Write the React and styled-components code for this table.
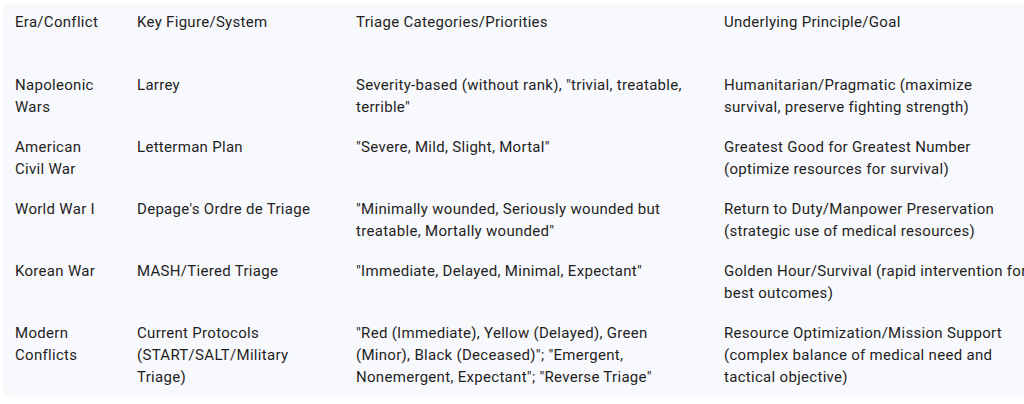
import React from "react";
import styled, { createGlobalStyle } from "styled-components";

// each cell keeps the line breaks of the source table
const rows = [
    {
        era: ["Napoleonic", "Wars"],
        figure: ["Larrey"],
        categories: ['Severity-based (without rank), "trivial, treatable,', 'terrible"'],
        goal: ["Humanitarian/Pragmatic (maximize", "survival, preserve fighting strength)"],
    },
    {
        era: ["American", "Civil War"],
        figure: ["Letterman Plan"],
        categories: ['"Severe, Mild, Slight, Mortal"'],
        goal: ["Greatest Good for Greatest Number", "(optimize resources for survival)"],
    },
    {
        era: ["World War I"],
        figure: ["Depage's Ordre de Triage"],
        categories: ['"Minimally wounded, Seriously wounded but', 'treatable, Mortally wounded"'],
        goal: ["Return to Duty/Manpower Preservation", "(strategic use of medical resources)"],
    },
    {
        era: ["Korean War"],
        figure: ["MASH/Tiered Triage"],
        categories: ['"Immediate, Delayed, Minimal, Expectant"'],
        goal: ["Golden Hour/Survival (rapid intervention for", "best outcomes)"],
    },
    {
        era: ["Modern", "Conflicts"],
        figure: ["Current Protocols", "(START/SALT/Military", "Triage)"],
        categories: [
            '"Red (Immediate), Yellow (Delayed), Green',
            '(Minor), Black (Deceased)"; "Emergent,',
            'Nonemergent, Expectant"; "Reverse Triage"',
        ],
        goal: [
            "Resource Optimization/Mission Support",
            "(complex balance of medical need and",
            "tactical objective)",
        ],
    },
];

const widths = [122, 219, 368, 340];

const renderLines = (lines) => lines.map((l, i) => <Line key={i}>{l}</Line>);

export default function App() {
    return (
        <>
            <GlobalStyle />
            <Page>
                <Panel>
                    <Table>
                        <colgroup>
                            {widths.map((w, i) => (
                                <col key={i} style={{ width: w }} />
                            ))}
                        </colgroup>
                        <thead>
                            <tr>
                                <HeadCell>Era/Conflict</HeadCell>
                                <HeadCell>Key Figure/System</HeadCell>
                                <HeadCell>Triage Categories/Priorities</HeadCell>
                                <HeadCell>Underlying Principle/Goal</HeadCell>
                            </tr>
                        </thead>
                        <tbody>
                            {rows.map((row) => (
                                <tr key={row.era.join(" ")}>
                                    <Cell>{renderLines(row.era)}</Cell>
                                    <Cell>{renderLines(row.figure)}</Cell>
                                    <Cell>{renderLines(row.categories)}</Cell>
                                    <Cell>{renderLines(row.goal)}</Cell>
                                </tr>
                            ))}
                        </tbody>
                    </Table>
                </Panel>
            </Page>
        </>
    );
}

const GlobalStyle = createGlobalStyle`
    body {
        margin: 0;
        background: #ffffff;
        overflow: hidden;
        font-family: Roboto, "Liberation Sans", sans-serif;
        color: #1f1f1f;
    }
`;

const Page = styled.div`
    padding: 4px 0 0 3px;
    width: 1100px;
`;

const Panel = styled.div`
    display: inline-block;
    background: #f8f9fc;
    border-radius: 8px;
`;

const Table = styled.table`
    border-collapse: collapse;
    table-layout: fixed;
    width: 1049px;
    font-size: 15px;
    line-height: 22px;
    letter-spacing: 0.3px;
`;

const HeadCell = styled.th`
    text-align: left;
    font-weight: 400;
    vertical-align: top;
    padding: 7px 12px 32px;
`;

const Cell = styled.td`
    vertical-align: top;
    padding: 9px 12px;
`;

const Line = styled.span`
    display: block;
    white-space: nowrap;
`;
